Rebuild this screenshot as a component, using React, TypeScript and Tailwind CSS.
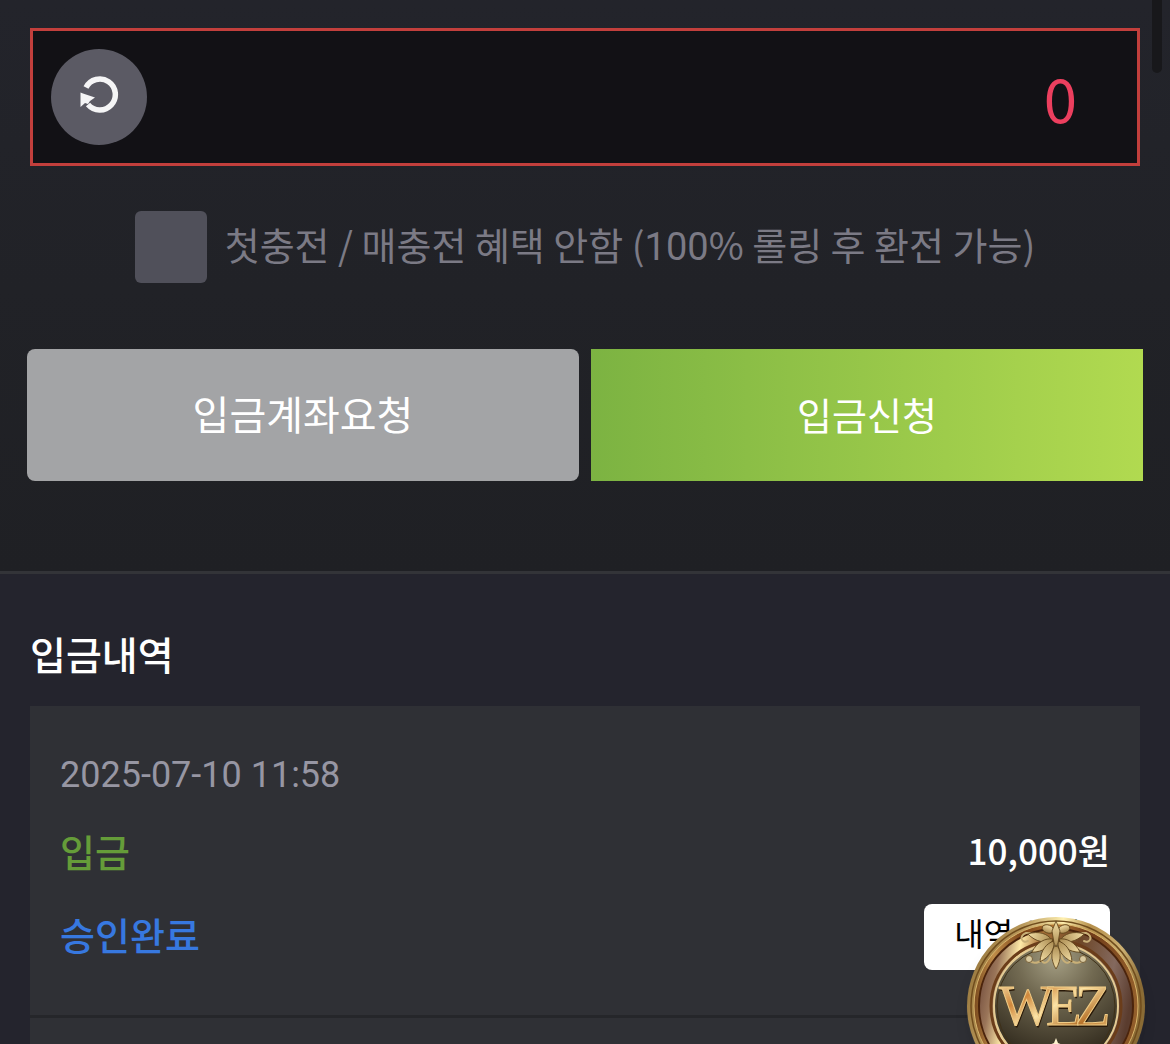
import { useState } from "react";

const leaf = "M0 0 C-5 -6 -6 -15 0 -25 C6 -15 5 -6 0 0 Z";

function RefreshIcon() {
  return (
    <svg viewBox="0 0 40 40" className="w-10 h-10" aria-hidden="true">
      <path
        d="M7 12.5 A15.5 15.5 0 1 1 9 29.5"
        fill="none"
        stroke="#f5f5f6"
        strokeWidth="5.5"
      />
      <path d="M1.5 17.5 L4 18.5 L16 22.5 L11 26 L9 29 L6 28 L1.5 32 Z" fill="#f5f5f6" />
    </svg>
  );
}

function WezBadge() {
  return (
    <svg viewBox="0 0 180 180" className="w-full h-full" role="img" aria-label="WEZ">
      <defs>
        <linearGradient id="rim" x1="0" y1="0" x2="1" y2="0.3">
          <stop offset="0" stopColor="#8d6c33" />
          <stop offset="0.3" stopColor="#b7975a" />
          <stop offset="0.5" stopColor="#fff0b0" />
          <stop offset="0.65" stopColor="#b58f4b" />
          <stop offset="0.85" stopColor="#cdb173" />
          <stop offset="1" stopColor="#8a6b35" />
        </linearGradient>
        <linearGradient id="band" x1="0" y1="0" x2="1" y2="0">
          <stop offset="0" stopColor="#7a4a1e" />
          <stop offset="0.12" stopColor="#c08d4a" />
          <stop offset="0.3" stopColor="#7a4216" />
          <stop offset="0.5" stopColor="#b87a36" />
          <stop offset="0.7" stopColor="#6e3a18" />
          <stop offset="1" stopColor="#94602c" />
        </linearGradient>
        <linearGradient id="groove" x1="0" y1="0.2" x2="1" y2="0.4">
          <stop offset="0" stopColor="#6b4638" />
          <stop offset="0.12" stopColor="#9a7559" />
          <stop offset="0.24" stopColor="#ffeaa8" />
          <stop offset="0.36" stopColor="#a87138" />
          <stop offset="0.6" stopColor="#6d4626" />
          <stop offset="0.85" stopColor="#84695e" />
          <stop offset="1" stopColor="#5a3c2e" />
        </linearGradient>
        <radialGradient id="face" cx="0.5" cy="0.12" r="0.8">
          <stop offset="0" stopColor="#a59f84" />
          <stop offset="0.4" stopColor="#716951" />
          <stop offset="1" stopColor="#332c1f" />
        </radialGradient>
        <linearGradient id="letters" x1="0" y1="0" x2="1" y2="1">
          <stop offset="0" stopColor="#fff1c4" />
          <stop offset="0.3" stopColor="#d0883c" />
          <stop offset="0.5" stopColor="#fbe3a6" />
          <stop offset="0.75" stopColor="#b8742c" />
          <stop offset="1" stopColor="#f3d08a" />
        </linearGradient>
        <linearGradient id="leaf" x1="0" y1="0" x2="0" y2="1">
          <stop offset="0" stopColor="#f3dfa6" />
          <stop offset="1" stopColor="#a98a50" />
        </linearGradient>
      </defs>

      <circle cx="90" cy="90" r="89" fill="url(#rim)" />
      <circle cx="90" cy="90" r="85" fill="none" stroke="#6f4c1d" strokeWidth="1.5" />
      <circle cx="90" cy="90" r="82" fill="url(#band)" stroke="#d9b56c" strokeWidth="1" />
      <circle cx="90" cy="90" r="77" fill="url(#groove)" stroke="#4b240c" strokeWidth="2" />
      <circle cx="90" cy="90" r="65" fill="none" stroke="#6b3d1a" strokeWidth="3" />
      <circle cx="90" cy="90" r="62" fill="url(#face)" stroke="#e4cb94" strokeWidth="2" />
      <circle cx="90" cy="90" r="59" fill="none" stroke="#3e3018" strokeWidth="1" />

      {/* floral crest */}
      <g fill="none" stroke="#c9b078" strokeWidth="2" strokeLinecap="round">
        <path d="M84 24 C74 30 72 16 60 17 C52 20 56 28 62 25" />
        <path d="M96 24 C106 30 108 16 120 17 C128 20 124 28 118 25" />
        <path d="M84 34 C78 46 68 50 63 44" />
        <path d="M96 34 C102 46 112 50 117 44" />
        <path d="M85 38 C84 46 78 49 76 45 M95 38 C96 46 102 49 104 45" />
      </g>
      <g fill="url(#leaf)" stroke="#5d4119" strokeWidth="0.8">
        <path d={leaf} transform="translate(86 24) rotate(-76)" />
        <path d={leaf} transform="translate(94 24) rotate(76)" />
        <path d={leaf} transform="translate(87 23) rotate(-122)" />
        <path d={leaf} transform="translate(93 23) rotate(122)" />
        <path d={leaf} transform="translate(88 25) rotate(-146)" />
        <path d={leaf} transform="translate(92 25) rotate(146)" />
        <path d={leaf} transform="translate(90 28) rotate(180)" />
        <ellipse cx="82" cy="13" rx="6" ry="4" transform="rotate(20 82 13)" />
        <ellipse cx="98" cy="13" rx="6" ry="4" transform="rotate(-20 98 13)" />
        <path d="M90 5 L94 15 L92 27 L90 31 L88 27 L86 15 Z" />
      </g>
      <circle cx="63" cy="43" r="3.5" fill="#d9caa0" stroke="#77613a" />
      <circle cx="117" cy="43" r="3.5" fill="#d9caa0" stroke="#77613a" />

      {/* interlocked lettering */}
      <text
        x="34 81 110"
        y="111"
        fill="#281808"
        className="font-['Liberation_Serif',serif] text-[58px]"
        aria-hidden="true"
      >
        WEZ
      </text>
      <text
        x="33 80 109"
        y="109"
        fill="url(#letters)"
        stroke="#f0cc86"
        strokeWidth="1"
        className="font-['Liberation_Serif',serif] text-[58px]"
      >
        WEZ
      </text>
      <path d="M90 122 L92 127 L97 129 L92 131 L90 136 L88 131 L83 129 L88 127 Z" fill="#fff3cf" />
    </svg>
  );
}

export default function App() {
  const [amount, setAmount] = useState("0");

  return (
    <div className="relative h-screen overflow-hidden bg-[#24242d] font-[Roboto,'Noto_Sans_CJK_KR',sans-serif]">
      <form
        className="border-b-3 border-[#333438] bg-linear-to-b from-[#23242b] via-[#212227] to-[#1f2024] pt-7 pb-[90px]"
        onSubmit={(e) => e.preventDefault()}
      >
        <div className="mx-[30px] flex h-[138px] items-center border-3 border-[#c23f3c] bg-[#121115] pl-[18px] pr-[60px]">
          <button
            type="button"
            aria-label="초기화"
            onClick={() => setAmount("0")}
            className="flex w-24 h-24 shrink-0 items-center justify-center rounded-full bg-[#5b5a64] pb-1"
          >
            <RefreshIcon />
          </button>
          <input
            type="text"
            aria-label="입금금액"
            value={amount}
            onChange={(e) => setAmount(e.target.value)}
            className="min-w-0 flex-1 bg-transparent text-right font-['Noto_Sans_CJK_KR',sans-serif] text-[60px] leading-[80px] text-[#ec3f5e] outline-none"
          />
        </div>

        <label className="mt-[45px] flex items-center justify-center gap-[18px] font-['Noto_Sans_CJK_KR',sans-serif] text-[38px] leading-[60px] text-[#7b7a85]">
          <input
            type="checkbox"
            className="w-[72px] h-[72px] shrink-0 appearance-none rounded-md bg-[#50505a] checked:bg-[#7cb342]"
          />
          <span className="pb-1">
            첫충전 / 매충전 혜택 안함 (<span className="font-[Roboto]">100</span>% 롤링 후 환전 가능)
          </span>
        </label>

        <div className="mx-[27px] mt-[66px] grid grid-cols-2 gap-3 text-white">
          <button type="button" className="h-[132px] rounded-lg bg-[#a3a4a6] pt-1 text-[40px]">
            입금계좌요청
          </button>
          <button
            type="submit"
            className="h-[132px] bg-linear-to-r from-[#7cb342] to-[#b1da50] pt-1 text-[38px]"
          >
            입금신청
          </button>
        </div>
      </form>

      <section className="px-[30px] pt-[53px]">
        <h2 className="text-[39px] font-medium leading-[60px] text-white">입금내역</h2>

        <ul className="mt-[19px]">
          <li className="border-b-3 border-[#25262a] bg-[#2f3035] px-[30px] pt-[39px] pb-[45px]">
            <time className="block text-[36px] leading-[60px] text-[#9796a3]">
              2025-07-10 11:58
            </time>
            <div className="mt-3 flex items-start justify-between font-medium">
              <span className="pt-1 text-[38px] leading-[66px] text-[#659c39]">입금</span>
              <span className="font-['Noto_Sans_CJK_KR',sans-serif] text-[35px] leading-[66px] text-white">
                10,000원
              </span>
            </div>
            <div className="mt-[17px] flex items-center justify-between">
              <span className="text-[38px] font-medium leading-[66px] text-[#3778e0]">
                승인완료
              </span>
              <button
                type="button"
                className="h-[66px] rounded-lg bg-white px-[30px] pb-1 text-[32px] leading-[60px] text-black"
              >
                내역 삭제
              </button>
            </div>
          </li>
          <li className="h-[309px] bg-[#2f3035]" />
        </ul>
      </section>

      {/* scroll thumb */}
      <div className="absolute top-0 right-2 h-[73px] w-[10px] rounded-b-full bg-[#18181b]" />

      <a
        href="#wez"
        className="absolute -bottom-[52px] right-6 block w-[180px] h-[180px] rounded-full shadow-lg"
      >
        <WezBadge />
      </a>
    </div>
  );
}
